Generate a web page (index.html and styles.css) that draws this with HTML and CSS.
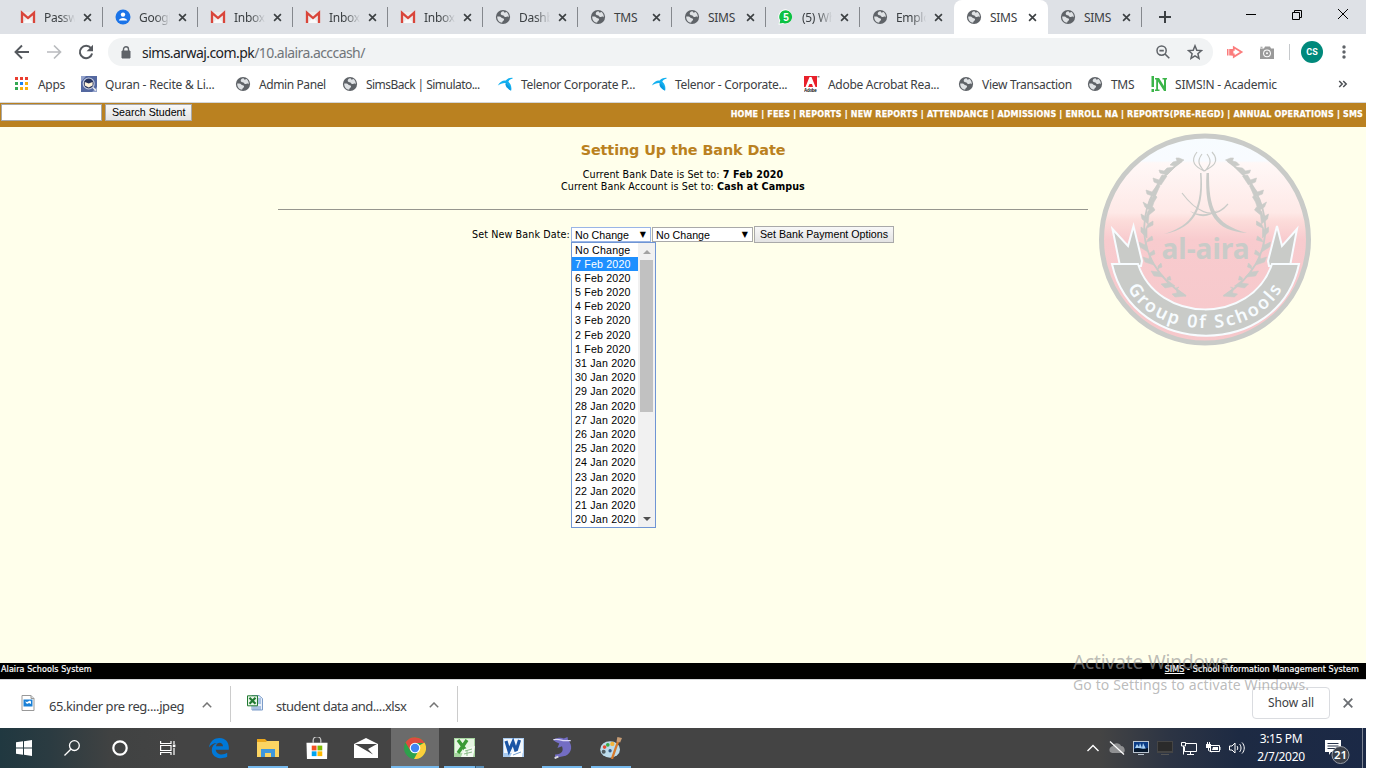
FILE: index.html
```html
<!DOCTYPE html>
<html lang="en">
<head>
<meta charset="utf-8">
<title>SIMS</title>
<link rel="stylesheet" href="styles.css">
</head>
<body>
<svg class="defs" width="0" height="0">
  <symbol id="globe" viewBox="0 0 16 16"><circle cx="8" cy="8" r="7.100" fill="#5f6368"/><path d="M8.600 2.300C6.500 2.500 5.300 4 5.800 5.200 6.500 6.500 8.500 5.800 9 7c.3 1 1.500 1.200 2.600.8 1-.4 1.900-.2 2.200.6C14 5 12 3 10.800 3 10.500 4 9 4 8.600 2.300zM2.200 7.500C2 11 4.500 13.600 7.200 13.800 7 12 9.500 11.800 9 10 8.500 8.800 7 9.500 6.200 8.400 5.500 7.400 3.500 7.600 2.200 7.500z" fill="#dfe2e5"/></symbol>
  <symbol id="gmail" viewBox="0 0 16 16"><path d="M1 3h14v11H1z" fill="#eceaea"/><path d="M3 14 8 8.500l5 5.500z" fill="#fafafa"/><path d="M2 14V3.800l6 5.200 6-5.200V14" fill="none" stroke="#d9453a" stroke-width="2.300"/></symbol>
  <symbol id="close" viewBox="0 0 10 10"><path d="M1.200 1.200 8.800 8.800M8.800 1.200 1.200 8.800" stroke="#3c4043" stroke-width="1.800"/></symbol>
  <symbol id="telenor" viewBox="0 0 16 16"><path d="M.8 9.500C3 5.500 6 4.200 8.800 4.600 10 2.500 12.500 1.700 15.500 1.800v1C13.500 3 12 4 11.300 5.800 13.500 7.500 15 11 14.200 14.500L11.500 13C12 10 11 8 9 7 6 6.600 3.500 7.800 .8 9.500z" fill="#12b0f0"/><path d="M8.800 6.500C7.800 9.500 9 12 14 14.700 13.500 11 11.500 8.500 8.800 6.500z" fill="#0a9ae0"/></symbol>
  <symbol id="up" viewBox="0 0 10 6"><path d="M.8 5.200 5 1l4.200 4.200" fill="none" stroke="#757575" stroke-width="1.500"/></symbol>
</svg>

<div class="screen">
  <div class="tabstrip">
    <div class="tab"><svg class="fav"><use href="#gmail"/></svg><span class="tab-title">Passw</span><svg class="x"><use href="#close"/></svg></div>
    <div class="tab"><svg class="fav" viewBox="0 0 16 16"><circle cx="8" cy="8" r="7.500" fill="#1a73e8"/><circle cx="8" cy="5.600" r="2.200" fill="#fff"/><path d="M3.800 11.500C4.500 8 11.500 8 12.200 11.500z" fill="#fff"/></svg><span class="tab-title">Googl</span><svg class="x"><use href="#close"/></svg></div>
    <div class="tab"><svg class="fav"><use href="#gmail"/></svg><span class="tab-title">Inbox</span><svg class="x"><use href="#close"/></svg></div>
    <div class="tab"><svg class="fav"><use href="#gmail"/></svg><span class="tab-title">Inbox</span><svg class="x"><use href="#close"/></svg></div>
    <div class="tab"><svg class="fav"><use href="#gmail"/></svg><span class="tab-title">Inbox</span><svg class="x"><use href="#close"/></svg></div>
    <div class="tab"><svg class="fav"><use href="#globe"/></svg><span class="tab-title">Dashb</span><svg class="x"><use href="#close"/></svg></div>
    <div class="tab narrow"><svg class="fav"><use href="#globe"/></svg><span class="tab-title plain">TMS</span><svg class="x"><use href="#close"/></svg></div>
    <div class="tab narrow"><svg class="fav"><use href="#globe"/></svg><span class="tab-title plain">SIMS</span><svg class="x"><use href="#close"/></svg></div>
    <div class="tab narrow"><svg class="fav" viewBox="0 0 16 16"><path d="M8 .3A7.500 7.500 0 1 1 5 15L.5 15.700 1.300 11.500A7.500 7.500 0 0 1 8 .3z" fill="#fff"/><path d="M8 1.300A6.600 6.600 0 1 1 5 14L1.600 14.600 2.200 11.300A6.600 6.600 0 0 1 8 1.300z" fill="#0dc143"/><text x="8" y="11.800" text-anchor="middle" class="wa">5</text></svg><span class="tab-title">(5) Wh</span><svg class="x"><use href="#close"/></svg></div>
    <div class="tab narrow last"><svg class="fav"><use href="#globe"/></svg><span class="tab-title">Emplo</span><svg class="x"><use href="#close"/></svg></div>
    <div class="tab narrow active"><svg class="fav"><use href="#globe"/></svg><span class="tab-title plain">SIMS</span><svg class="x"><use href="#close"/></svg></div>
    <div class="tab narrow"><svg class="fav"><use href="#globe"/></svg><span class="tab-title plain">SIMS</span><svg class="x"><use href="#close"/></svg></div>
    <svg class="plus" viewBox="0 0 12 12"><path d="M6 0v12M0 6h12" stroke="#3c4043" stroke-width="2"/></svg>
    <svg class="winbtns" viewBox="0 0 110 12" fill="none" stroke="#000"><path d="M4 6.500h10M50.500 4.500h7v7h-7zM52.500 4.500v-2h7v7h-2M96 1l10 10M106 1 96 11"/></svg>
  </div>

  <div class="toolbar">
    <div class="nav">
      <svg viewBox="0 0 16 16"><path d="M15 8H2M8 1.500 1.500 8 8 14.500" fill="none" stroke="#55595e" stroke-width="1.900"/></svg>
      <svg viewBox="0 0 16 16"><path d="M1 8h13M8 1.500 14.500 8 8 14.500" fill="none" stroke="#b9bbbe" stroke-width="1.700"/></svg>
      <svg viewBox="0 0 16 16"><path d="M13 4.200A6.200 6.200 0 1 0 14.100 9.500" fill="none" stroke="#55595e" stroke-width="2"/><path d="M15 .8v6.400H8.600z" fill="#55595e"/></svg>
    </div>
    <div class="omnibox">
      <svg class="lock" viewBox="0 0 10 13"><path d="M1 5h8v7H1z" fill="#5f6368" stroke="#5f6368"/><path d="M2.500 5V3.300a2.500 2.500 0 0 1 5 0V5" fill="none" stroke="#5f6368" stroke-width="1.400"/></svg>
      <span class="url">sims.arwaj.com.pk<span class="path">/10.alaira.acccash/</span></span>
      <svg class="zoomico" viewBox="0 0 14 14"><circle cx="5.600" cy="5.600" r="4.600" fill="none" stroke="#5f6368" stroke-width="1.500"/><path d="M9 9l4.300 4.300M3.400 5.600h4.400" stroke="#5f6368" stroke-width="1.600"/></svg>
      <svg class="star" viewBox="0 0 16 16"><path d="M8 1.800 9.800 6.200l4.700.4-3.600 3.100 1.100 4.600L8 11.800 4 14.300l1.100-4.600L1.500 6.600l4.700-.4z" fill="none" stroke="#5f6368" stroke-width="1.500"/></svg>
    </div>
    <svg class="ext" viewBox="0 0 17 14"><path d="M0 4h1.500v6.500H0zM2.200 4H7v6.500H2.200z" fill="#fb7d7d"/><path d="M6.800 2.300 14.500 7 6.800 11.800V9.500H5.500V4.800h1.300z" fill="#fff" stroke="#fb7d7d" stroke-width="1.800"/></svg>
    <svg class="cam" viewBox="0 0 14 13"><path d="M0 2.500h4L5 .5h5l1 2h3V13H0zM.5 .8h2v1h-2z" fill="#9a9a9a"/><circle cx="7" cy="7.300" r="3.900" fill="#fff"/><circle cx="7" cy="7.300" r="2.900" fill="#9a9a9a"/><circle cx="7" cy="7.300" r="1" fill="#fff"/></svg>
    <span class="avatar">CS</span>
    <svg class="dots" viewBox="0 0 4 14" fill="#5f6368"><circle cx="2" cy="2" r="1.700"/><circle cx="2" cy="7" r="1.700"/><circle cx="2" cy="12" r="1.700"/></svg>
  </div>

  <div class="bookmarks">
    <div><svg viewBox="0 0 16 16"><path d="M1 1h3v3H1zM6 1h3v3H6zM11 1h3v3h-3z" fill="#ea3d2f"/><path d="M1 6h3v3H1zM1 11h3v3H1z" fill="#34a853"/><path d="M6 6h3v3H6z" fill="#1a82f0"/><path d="M11 6h3v3h-3zM6 11h3v3H6zM11 11h3v3h-3z" fill="#f9b00b"/></svg><span>Apps</span></div>
    <div><svg viewBox="0 0 16 16"><path d="M0 0h16v16H0z" fill="#5468a0"/><path d="M0 0h5L0 6zM16 16h-5l5-5z" fill="#93a2ca"/><circle cx="7.700" cy="7.500" r="5.500" fill="#27335c" stroke="#c5cde2" stroke-width="1.200"/><path d="M3.800 6l3.900 1.500L11.600 6v3.500L7.700 11.500 3.800 9.500z" fill="#fff3d9"/><path d="M12 11.500l3 3" stroke="#eee" stroke-width="1.500"/></svg><span class="quran">Quran - Recite &amp; Li...</span></div>
    <div><svg><use href="#globe"/></svg><span class="admin">Admin Panel</span></div>
    <div><svg><use href="#globe"/></svg><span class="simsback">SimsBack | Simulato...</span></div>
    <div><svg><use href="#telenor"/></svg><span>Telenor Corporate P...</span></div>
    <div><svg><use href="#telenor"/></svg><span>Telenor - Corporate...</span></div>
    <div><svg viewBox="0 0 16 16"><path d="M0 0h13v11H0z" fill="#e8202a"/><path d="M1.500 11 5.500 1h2l4 10H9L8 8H5.500L7 5 4 11z" fill="#fff"/><path d="M13.500 .8h2" stroke="#555"/><text x="0" y="15.700" class="adobe" textLength="12.500" lengthAdjust="spacingAndGlyphs">Adobe</text></svg><span>Adobe Acrobat Rea...</span></div>
    <div><svg><use href="#globe"/></svg><span>View Transaction</span></div>
    <div><svg><use href="#globe"/></svg><span>TMS</span></div>
    <div><svg viewBox="0 0 16 16"><path d="M.5 0h2.500v11H.5zM.5 13h2.500v3H.5z" fill="#3cb54a"/><path d="M4 2h4l5 8V3.500h-1.500V2H16v1.500h-1V15h-2L7 5.500v8h1.500V15H4v-1.500h1.200v-10H4z" fill="#3cb54a"/></svg><span class="in">SIMS!N - Academic</span></div>
    <svg class="more" viewBox="0 0 10 8"><path d="M1.200 1l3 3-3 3M5.200 1l3 3-3 3" fill="none" stroke="#4b4f54" stroke-width="1.500"/></svg>
  </div>

  <div class="page">
    <div class="menubar">
      <span class="field"></span><span class="btn search">Search Student</span>
      <span class="links">HOME | FEES | REPORTS | NEW REPORTS | ATTENDANCE | ADMISSIONS | ENROLL NA | REPORTS(PRE-REGD) | ANNUAL OPERATIONS | SMS</span>
    </div>
    <div class="content">
      <h1>Setting Up the Bank Date</h1>
      <p class="info"><span>Current Bank Date is Set to: <b>7 Feb 2020</b></span><br><span>Current Bank Account is Set to: <b>Cash at Campus</b></span></p>
      <div class="rule"></div>
      <div class="form">
        <span class="label">Set New Bank Date:</span>
        <span class="select focus">No Change<i>▼</i>
          <span class="menu">
            <span class="opts">
              <span>No Change</span><span class="sel">7 Feb 2020</span><span>6 Feb 2020</span><span>5 Feb 2020</span><span>4 Feb 2020</span><span>3 Feb 2020</span><span>2 Feb 2020</span><span>1 Feb 2020</span><span>31 Jan 2020</span><span>30 Jan 2020</span><span>29 Jan 2020</span><span>28 Jan 2020</span><span>27 Jan 2020</span><span>26 Jan 2020</span><span>25 Jan 2020</span><span>24 Jan 2020</span><span>23 Jan 2020</span><span>22 Jan 2020</span><span>21 Jan 2020</span><span>20 Jan 2020</span>
            </span>
            <span class="scroll"><svg viewBox="0 0 8 4"><path d="M0 4 4 0l4 4z" fill="#a3a3a3"/></svg><span class="thumb"></span><svg viewBox="0 0 8 4"><path d="M0 0h8L4 4z" fill="#505050"/></svg></span>
          </span>
        </span>
        <span class="select wide">No Change<i>▼</i></span>
        <span class="btn">Set Bank Payment Options</span>
      </div>
      <svg class="crest" viewBox="0 0 240 230">
        <defs>
          <linearGradient id="sky" x1="0" y1="0" x2="0" y2="1"><stop offset="0" stop-color="#f7fcff"/><stop offset=".12" stop-color="#f8fbff"/><stop offset=".13" stop-color="#fff8f7"/><stop offset=".37" stop-color="#fee9e7"/><stop offset=".41" stop-color="#fcdcda"/><stop offset=".5" stop-color="#f8cbce"/><stop offset="1" stop-color="#f6c8cb"/></linearGradient>
          <path id="arc" d="M42.500 162C66 215 174 221 201 156"/>
          <g id="wreath" stroke="#c9cbc8" fill="#c9cbc8">
            <path d="M97 36C50 68 42 135 101 171" fill="none" stroke-width="1.800"/>
            <path d="M99 35l-9 6-5-1 3-3 4-1-1-3 3 0zM90 42l-8 8-7-2-1-3 5 1 3-3zM82 51l-6 9-7-3-1-4 6 2 3-5zM74 63l-4 9-8-3-1-4 6 2 3-4 3-5 2 3zM69 77l-3 9-6-4-2-5 5 3 2-6 5-4 2 2zM64 90l-1 9-6-5-1-5 5 3 2-6 5-4 2 3zM62 103v10l-6-6v-5l4 3 3-6 5-3v4zM61 117l2 10-8-5-1-5 6 3 3-6 4-3 1 4zM65 131l4 9-9-3-2-5 6 2 1-6 4-3 1 4zM72 144l7 8-10-1-3-5 7 1v-6l3-3 1 4zM82 155l8 6-10 2-4-4 7-1-1-5 3-2 1 4zM92 164l9 7-11 1-3-3 5-1-1-5 3-1z" stroke-width=".6"/>
          </g>
        </defs>
        <circle cx="120" cy="114.500" r="103.500" fill="url(#sky)" stroke="#c9cbc8" stroke-width="5"/>
        <use href="#wreath"/><use href="#wreath" transform="translate(239.500 0) scale(-1 1)"/>
        <g fill="none" stroke="#c9cbc8" stroke-width="1.200">
          <path d="M112 27C104 37 111 42 119 46 127 42 136 37 127 27M117 29c-6 8-2 12 2 17M122 29c6 8 2 12-2 17"/>
          <path d="M97 68c12 16 30 30 46 11"/>
        </g>
        <path d="M115 48h1.500C119 79 113 103 79 109c22-7 39-18 36-61zM121.500 48H124c0 35 5 51 38 60-31-2-43-18-40.500-60z" fill="#c9cbc8"/>
        <path d="M105 86c10 5 19 4 28-1-9 8-20 8-28 1z" fill="#c9cbc8"/>
        <text x="76.500" y="134" textLength="88" lengthAdjust="spacingAndGlyphs" class="name">al-aira</text>
        <g fill="#c9cbc8" stroke="#f7fcff" stroke-width="2"><path d="M27.500 104 43 121 48.500 101l8.500 35-1 5H35z"/><path d="M212 104 197 121 192 101l-9 35 1 5h21z"/>
        <path d="M27 139h26C72 198 166 201 187 139h27C194 235 48 234 27 139z"/></g>
        <text class="group"><textPath href="#arc" textLength="182" lengthAdjust="spacing" startOffset="1">Group 0f Schools</textPath></text>
      </svg>
    </div>
    <div class="footer"><span class="fl">Alaira Schools System</span><span class="fr"><u>SIMS</u> - School Information Management System</span></div>
  </div>

  <div class="downloads">
    <div class="dl"><svg viewBox="0 0 14 16"><path d="M1 .5h9l3 3v12H1z" fill="#fff" stroke="#999"/><path d="M10 .5v3h3" fill="#ddd" stroke="#999"/><path d="M2.500 4.500h9v7h-9z" fill="#1a80d6"/><path d="M4 6.500l2 .5 3-1.500 1 1V9l-2-1-2 1z" fill="#fff"/></svg><span class="f1">65.kinder pre reg....jpeg</span><svg class="chev"><use href="#up"/></svg></div>
    <div class="dl second"><svg viewBox="0 0 16 16"><path d="M5 .5h7l3.500 3V15H5z" fill="#e9f0fa" stroke="#7c9cc9"/><path d="M6 12h8M6 14h8M11 4h3M11 6h3M11 8h3" stroke="#6a93cc"/><path d="M.5 .800h10v10H.5z" fill="#eaf6ea" stroke="#217a31"/><path d="M2.500 2.800l6 6M8.500 2.800l-6 6" stroke="#217a31" stroke-width="2.200"/></svg><span class="f2">student data and....xlsx</span><svg class="chev"><use href="#up"/></svg></div>
    <span class="showall">Show all</span>
    <svg class="dx" viewBox="0 0 10 10"><path d="M.7.7l8.600 8.600M9.300.7.7 9.300" stroke="#6b6e72" stroke-width="1.800"/></svg>
  </div>

  <div class="taskbar">
    <div class="sys"><svg viewBox="0 0 16 16" fill="#fff"><path d="M0 2.300l7-1v6.200H0zM8 1.200 16 0v7.500H8zM0 8.500h7v6.200l-7-1zM8 8.500h8V16l-8-1.200z"/></svg></div>
    <div class="sys"><svg viewBox="0 0 16 16" fill="none" stroke="#fff" stroke-width="1.300"><circle cx="10.400" cy="5.600" r="4.900"/><path d="M6.800 9.200.5 15.500"/></svg></div>
    <div class="sys"><svg viewBox="0 0 16 16"><circle cx="8" cy="8" r="6.700" fill="none" stroke="#fff" stroke-width="2.200"/></svg></div>
    <div class="sys"><svg viewBox="0 0 16 16" fill="none" stroke="#fff" stroke-width="1.200"><path d="M.6 1v2.500H11V1M.6 5.500H11v5H.6zM.6 15v-2.500H11V15M14 1v3M14 8v7"/><path d="M12.800 4.500h2.600v2.600h-2.600z" fill="#fff" stroke="none"/></svg></div>
    <div class="app first"><svg viewBox="0 0 22 22"><path d="M1 10.500C2 4 6.500 1 11.500 1 18 1 21.500 6 20.800 12.700H7.700c.4 5 7 6 11.500 3.100v4C12.500 23 3.800 21 3.800 13 3.800 9.500 6 7 9 6 5.500 6.200 3 7.500 1 10.500zM8 9.300h7C15 4.800 8.700 4.500 8 9.300z" fill="#0078d7"/></svg></div>
    <div class="app run"><svg viewBox="0 0 22 20"><path d="M0 1h8l2 2h12v16H0z" fill="#eba71c"/><path d="M0 4h9l1-1h12v16H0z" fill="#fcd462"/><path d="M4 19v-8h14v8h-4v-4H8v4z" fill="#3f97dc"/></svg></div>
    <div class="app"><svg class="store" viewBox="0 0 22 23"><path d="M7 6V3.500a4 4 0 0 1 8 0V6" fill="none" stroke="#ccc" stroke-width="1.300"/><path d="M0 6h22l-.5 17H.5z" fill="#fff"/><path d="M5.500 9h5v5h-5z" fill="#f25022"/><path d="M11.500 9h5v5h-5z" fill="#7fba00"/><path d="M5.500 15h5v5h-5z" fill="#00a4ef"/><path d="M11.500 15h5v5h-5z" fill="#ffb900"/></svg></div>
    <div class="app"><svg class="mail" viewBox="0 0 24 20"><path d="M0 6 12 0l12 6v14H0z" fill="#fff"/><path d="M1 6h22l-9 5 5 5.500L1 6z" fill="#444"/></svg></div>
    <div class="app current"><svg viewBox="0 0 22 22"><circle cx="11" cy="11" r="11" fill="#2da14c"/><path d="M11 11 20.500 5.500A11 11 0 0 1 10 22l6-11z" fill="#fbcf3b"/><path d="M1.500 5.500A11 11 0 0 1 20.600 6H11L6 13z" fill="#df4b3f"/><circle cx="11" cy="11" r="5.300" fill="#fff"/><circle cx="11" cy="11" r="4.200" fill="#4285f4"/></svg></div>
    <div class="app run multi"><svg viewBox="0 0 22 22"><path d="M1 1h21v19H1z" fill="#a7d6a0"/><path d="M2 2h19v14H2z" fill="#e6f5e2"/><path d="M5 3l9 12M14 3 5 16" stroke="#3a9a35" stroke-width="3.400"/><path d="M11 12l11-3-2 11H8z" fill="#f4faf2"/><path d="M12 14l7-2M11 17l8-2M14 13v6" stroke="#8abc87"/></svg></div>
    <div class="app"><svg viewBox="0 0 22 22"><path d="M1 1h21v19H1z" fill="#a9cbf0"/><path d="M2 2h19v14H2z" fill="#f2f7fd"/><path d="M4 4l3 10 4-9 3 9 3.500-11" fill="none" stroke="#1b55a5" stroke-width="3.200"/><path d="M10 16l11-4-1 8H8z" fill="#fff"/><path d="M11 18l8-3" stroke="#75a0d2"/></svg></div>
    <div class="app run"><svg viewBox="0 0 22 24"><path d="M1.500 3C6 .500 10 .500 13 1.500L17 0l.5 3C23 9 22 17 15 20.500L7 22l-4 2 .5-5C11 19 13 15 11 10L6 12l2-5C5.500 6 3 5 1.500 3z" fill="#736dc3"/><path d="M1.500 3c4-1 7 0 11 1l8 0" stroke="#ddd9f7" stroke-width="1.300" fill="none"/><path d="M3 23l4-1.500" stroke="#ddd" stroke-width="2"/></svg></div>
    <div class="app run"><svg viewBox="0 0 24 24"><ellipse cx="11" cy="13.500" rx="10.800" ry="9" fill="#bcdcec"/><circle cx="4" cy="16" r="2.200" fill="#515d62"/><circle cx="5" cy="11" r="2" fill="#e54b32"/><circle cx="8.500" cy="8.500" r="2" fill="#39a94a"/><circle cx="13.500" cy="7.500" r="2.400" fill="#f4b53a"/><circle cx="11" cy="15" r="1.800" fill="#345c89"/><path d="M20 4 13 24" stroke="#d57a2d" stroke-width="2.500"/><path d="M18 5l1-5 5 1-2 5z" fill="#c79c74"/></svg></div>
    <div class="tray">
      <svg viewBox="0 0 16 16"><path d="M2.500 11 8 5.500l5.500 5.500" fill="none" stroke="#fff" stroke-width="1.400"/></svg>
      <svg viewBox="0 0 16 16"><path d="M1 12C-1 8 3 6 4 6c1-4 7-3 8 0 4 0 5 6 2 7H3z" fill="#8f9092"/><path d="M1 1.500 15 14.500" stroke="#fff" stroke-width="1.200"/></svg>
      <svg viewBox="0 0 16 16"><path d="M0 1h16v12H0zM5 14h6v1H5z" fill="#b9c4d0"/><path d="M1 2h14v9H1z" fill="#0b3c86"/><path d="M2 8l2-4 2 3 1-4 2 5 1-5 3 6z" fill="#a9d2f5"/><path d="M1 9l4-1 5 1 5-1v4H1z" fill="#07182d"/></svg>
      <svg viewBox="0 0 16 16"><path d="M0 1h16v12H0z" fill="#454545"/><path d="M1 2h14v9H1z" fill="#2b2b2b"/><path d="M4 14h8v1H4z" fill="#555"/></svg>
      <svg viewBox="0 0 16 16" fill="none" stroke="#fff"><path d="M5 3.500h10.500v8H3.500V7M9.500 11.500v3M6 14.500h7M.5 2.500h4v3.500h-4zM2.500 6v8.500"/></svg>
      <svg viewBox="0 0 16 16"><path d="M5.500 5.500h9v6h-9zM15 7v3" fill="none" stroke="#fff"/><path d="M8 7h5v3H7zM1 4h5v4H1z" fill="#fff"/><path d="M2.500 2v2M4.500 2v2M3.500 7v3.500l3 1.500" fill="none" stroke="#fff"/></svg>
      <svg viewBox="0 0 16 16" fill="none" stroke="#fff"><path d="M.5 6v4h2.500l3 3V3L3 6zM8 6c1 1 1 3 0 4M10.500 4c2 2 2 6 0 8M13 2.500c3 3 3 8 0 11"/></svg>
    </div>
    <div class="clock"><span>3:15 PM</span><span>2/7/2020</span></div>
    <div class="notif"><svg viewBox="0 0 26 24"><path d="M0 0h16v12H6l-2 3v-3H0z" fill="#fff"/><path d="M2.500 3.500h11M2.500 6h11M2.500 8.500h8" stroke="#26324a"/><circle cx="15.500" cy="15" r="8.500" fill="#3a3f49" stroke="#989ca4"/><text x="15.500" y="19" text-anchor="middle" class="n21">21</text></svg></div>
    <div class="peek"></div>
  </div>

  <div class="watermark"><span class="w1">Activate Windows</span><span class="w2">Go to Settings to activate Windows.</span></div>
</div>
</body>
</html>
```
FILE: styles.css
```css
* { box-sizing: border-box; }
body { margin: 0; background: #fff; font-family: "Noto Sans", sans-serif; font-size: 12px; color: #3c4043; overflow: hidden; }
svg { display: block; flex: none; }
.defs { position: absolute; }
.screen { position: relative; width: 1366px; height: 768px; display: flex; flex-direction: column; }

.tabstrip { height: 34px; background: #dee1e6; display: flex; padding-left: 8px; }
.tab { width: 95px; height: 34px; display: flex; align-items: center; padding-left: 12px; flex: none; }
.tab.narrow { width: 94px; }
.tab::after { content: ""; width: 1px; height: 20px; background: #85888d; margin-left: 10px; flex: none; }
.tab.last::after, .tab.active::after { visibility: hidden; }
.tab.active { background: #fff; border-radius: 8px 8px 0 0; }
.fav { width: 16px; height: 16px; }
.tab-title { width: 32px; margin-left: 8px; overflow: visible; white-space: nowrap; letter-spacing: -.3px; -webkit-mask-image: linear-gradient(90deg, #000 50%, transparent 98%); mask-image: linear-gradient(90deg, #000 50%, transparent 98%); }
.tab.narrow .tab-title { width: 31px; }
.tab .tab-title.plain { -webkit-mask-image: none; mask-image: none; }
.x { width: 9px; height: 9px; margin-left: 7px; }
.wa { font: bold 10px "Liberation Sans", sans-serif; fill: #fff; }
.plus { width: 12px; height: 12px; margin: 11px 0 0 17px; }
.winbtns { width: 110px; height: 12px; margin: 8px 14px 0 auto; }

.toolbar { height: 36px; display: flex; align-items: center; padding: 0 17px 0 14px; }
.nav { display: flex; gap: 16px; width: 94px; }
.nav svg { width: 16px; height: 16px; }
.omnibox { width: 1105px; height: 28px; border-radius: 14px; background: #f1f3f4; display: flex; align-items: center; padding: 0 10px 0 13px; }
.lock { width: 10px; height: 13px; }
.url { font-size: 14px; letter-spacing: -.57px; color: #202124; margin-left: 11px; flex: 1; }
.path { color: #70757a; }
.zoomico { width: 14px; height: 14px; margin-right: 17px; }
.star { width: 16px; height: 16px; }
.ext { width: 17px; height: 14px; margin-left: 14px; }
.cam { width: 14px; height: 13px; margin-left: 16px; }
.avatar { width: 22px; height: 22px; border-radius: 50%; background: #00897b; color: #fff; font: bold 9px/22px Roboto, sans-serif; text-align: center; margin-left: 27px; position: relative; }
.avatar::before { content: ""; position: absolute; left: -12px; top: 3px; width: 1px; height: 16px; background: #c6c9cc; }
.dots { width: 4px; height: 14px; margin-left: auto; margin-right: 3px; }

.bookmarks { height: 33px; border-bottom: 1px solid #d3d6d9; display: grid; grid-template-columns: 67px 154px 107px 155px 154px 153px 154px 129px 64px 187px 10px; padding: 0 0 4px 14px; align-items: center; }
.bookmarks div { display: flex; align-items: center; height: 28px; white-space: nowrap; letter-spacing: -.3px; }
.bookmarks div svg { width: 16px; height: 16px; margin-right: 8px; }
.bookmarks .quran { letter-spacing: -.2px; }
.bookmarks .admin { letter-spacing: -.4px; }
.bookmarks .simsback { letter-spacing: -.54px; }
.bookmarks .in { letter-spacing: -.18px; }
.adobe { font: bold 5px "Liberation Sans", sans-serif; fill: #111; }
.more { width: 10px; height: 8px; }

.page { height: 576px; display: flex; flex-direction: column; background: #ffffeb; font-family: "DejaVu Sans", sans-serif; color: #000; }
.menubar { height: 24px; background: #ba8120; display: flex; padding: 1px 3px 0 1px; }
.field { width: 101px; height: 17px; background: #fff; border: 1px solid #a9a9a9; }
.btn { height: 17px; padding: 0 5px; border: 1px solid #a9a9a9; background: linear-gradient(#f8f8f8, #e3e3e3); font: 10.670px/15px "Liberation Sans", sans-serif; white-space: nowrap; }
.search { margin-left: 3px; width: 87px; padding: 0 6px; }
.links { margin-left: auto; color: #fff; font: bold 8px/22px "DejaVu Sans", sans-serif; white-space: nowrap; letter-spacing: .18px; -webkit-text-stroke: .25px #fff; }
.content { height: 536px; position: relative; display: flex; flex-direction: column; align-items: center; }
h1 { margin: 13px 0 0; font-size: 14.400px; line-height: 20px; color: #ba8120; white-space: nowrap; letter-spacing: -.1px; }
.info { margin: 9px 0 0; font-size: 9.600px; line-height: 12px; text-align: center; white-space: nowrap; letter-spacing: .08px; }
.rule { width: 810px; height: 1px; background: #96968e; margin-top: 16px; }
.form { display: flex; align-items: center; height: 17px; margin-top: 16px; font-size: 9.600px; }
.label { width: 99px; white-space: nowrap; letter-spacing: .1px; }
.select { position: relative; width: 80px; height: 15px; border: 1px solid #a9a9a9; background: #fff; font: 10.670px/14px "Liberation Sans", sans-serif; padding-left: 3px; margin-right: 1px; }
.select.focus { outline: 1px solid #9ab5e6; outline-offset: -1px; border-color: #5e89d0; }
.select.wide { width: 101px; }
.select i { position: absolute; right: 4px; top: 0; font: 8px/13px "DejaVu Sans", sans-serif; }
.menu { position: absolute; left: -1px; top: 14px; width: 85px; height: 286px; border: 1px solid #6f95d4; background: #fff; display: flex; z-index: 2; }
.opts { width: 66px; display: flex; flex-direction: column; letter-spacing: .17px; margin-top: -.5px; }
.opts span { height: 14.200px; line-height: 14.200px; padding-left: 3px; white-space: nowrap; }
.opts .sel { background: #1e90ff; color: #fff; }
.scroll { width: 17px; background: #f1f1f1; display: flex; flex-direction: column; align-items: center; padding: 7px 0 6px; }
.scroll svg { width: 8px; height: 4px; }
.scroll .thumb { width: 13px; height: 152px; background: #c1c1c1; margin: 6px 0 auto; }
.crest { position: absolute; left: 1085px; top: -2px; width: 240px; height: 230px; }
.name { font: bold 29px "Noto Sans", sans-serif; fill: #c9cbc8; }
.group { font: 600 18px "Noto Sans", sans-serif; fill: #f7fcff; }
.footer { height: 16px; background: #000; color: #fff; display: flex; justify-content: space-between; font-size: 8px; line-height: 13px; padding: 0 7px 0 1px; letter-spacing: .09px; -webkit-text-stroke: .2px #fff; }

.downloads { height: 49px; border-top: 1px solid #d5d7da; background: #fff; display: flex; align-items: center; }
.dl { width: 231px; height: 36px; border-right: 1px solid #ccc; display: flex; align-items: center; padding-left: 21px; font-size: 13px; letter-spacing: -.42px; margin-top: -1px; }
.dl svg { width: 14px; height: 16px; margin-top: -2px; }
.dl span { margin-left: 14px; width: 136px; white-space: nowrap; margin-top: 5px; }
.dl .chev { width: 10px; height: 6px; margin: 2px 0 0 17px; }
.dl.second { width: 227px; padding-left: 16px; letter-spacing: -.47px; }
.dl.second svg:first-child { width: 16px; }
.dl.second span { margin-left: 13px; width: 131px; }
.dl.second .chev { margin-left: 22px; }
.showall { width: 78px; height: 32px; border: 1px solid #dadce0; border-radius: 4px; margin-left: auto; line-height: 29px; text-align: center; margin-top: -2px; letter-spacing: -.05px; }
.dx { width: 10px; height: 10px; margin: -2px 13px 0; }

.taskbar { height: 40px; background: linear-gradient(90deg, #203840 0, #2b3b41 50px, #404242 110px, #444 180px, #444 1100px, #2c3444 1170px, #1d2a43 1240px, #1b2946 1366px); display: flex; }
.sys { width: 48px; height: 40px; display: grid; place-items: center; }
.sys svg { width: 16px; height: 16px; }
.app { width: 48px; height: 40px; margin-right: 1px; display: grid; place-items: center; position: relative; }
.app.first { margin-left: 3px; }
.app svg { width: 22px; height: 22px; }
.app svg.mail { height: 20px; width: 24px; }
.app.run::after, .app.current::after { content: ""; position: absolute; left: 4px; width: 40px; bottom: 0; height: 2px; background: #76b9ed; }
.app.current { background: #6b6b6b; }
.app.current::after { left: 0; width: 48px; }
.app.multi::after { background: linear-gradient(90deg, #76b9ed 31px, #355a75 31px, #355a75 32px, #5a8db5 32px); }
.tray { display: flex; gap: 8px; margin-left: auto; height: 40px; align-items: center; }
.tray svg { width: 16px; height: 16px; }
.clock { width: 62px; margin-left: 5px; height: 40px; display: flex; flex-direction: column; align-items: center; color: #fff; line-height: 18px; padding-top: 2px; letter-spacing: -.35px; }
.notif { width: 27px; margin: 12px 10px 0 13px; }
.notif svg { width: 26px; height: 24px; }
.n21 { font: 600 11.500px "Noto Sans", sans-serif; fill: #fff; }
.peek { width: 4px; border-left: 1px solid #7d8492; }

.watermark { position: absolute; left: 1073px; top: 650px; display: flex; flex-direction: column; color: rgba(150, 150, 150, .65); white-space: nowrap; z-index: 3; }
.w1 { font-size: 19px; line-height: 24px; letter-spacing: -.1px; }
.w2 { font-size: 14px; line-height: 22px; letter-spacing: .12px; }
```
